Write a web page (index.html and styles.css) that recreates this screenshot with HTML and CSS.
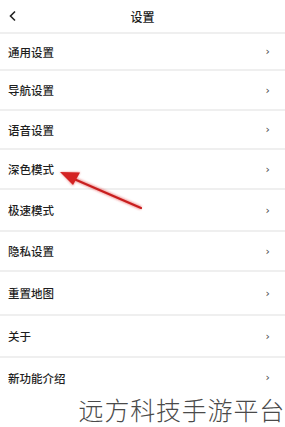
FILE: index.html
```html
<!DOCTYPE html>
<html lang="zh">
<head>
<meta charset="utf-8">
<link rel="stylesheet" href="styles.css">
</head>
<body>
<div class="screen">
  <header class="topbar">
    <svg class="back" width="10" height="12" viewBox="0 0 10 12"><path d="M7 1.5 L2.5 6 L7 10.5" fill="none" stroke="#222" stroke-width="1.6"/></svg>
    <span class="title">设置</span>
  </header>
  <ul class="list">
    <li class="row"><span>通用设置</span><i class="chev">›</i></li>
    <li class="row"><span>导航设置</span><i class="chev">›</i></li>
    <li class="row"><span>语音设置</span><i class="chev">›</i></li>
    <li class="row"><span>深色模式</span><i class="chev">›</i></li>
    <li class="row"><span>极速模式</span><i class="chev">›</i></li>
    <li class="row"><span>隐私设置</span><i class="chev">›</i></li>
    <li class="row"><span>重置地图</span><i class="chev">›</i></li>
    <li class="row"><span>关于</span><i class="chev">›</i></li>
    <li class="row"><span>新功能介绍</span><i class="chev">›</i></li>
  </ul>
  <svg class="arrow" width="285" height="427" viewBox="0 0 285 427">
    <defs>
      <filter id="glow" x="-20%" y="-20%" width="140%" height="140%">
        <feGaussianBlur stdDeviation="1.2"/>
      </filter>
    </defs>
    <g filter="url(#glow)" opacity="0.5">
      <line x1="141" y1="208" x2="72" y2="178" stroke="#e03030" stroke-width="4"/>
      <polygon points="60,172 80,172 73,186" fill="#e03030"/>
    </g>
    <line x1="141" y1="208" x2="74" y2="179" stroke="#c81e1e" stroke-width="2.2" stroke-linecap="round"/>
    <polygon points="60,172 80,172.5 73,185" fill="#d42222"/>
  </svg>
  <div class="watermark">远方科技手游平台</div>
</div>
</body>
</html>
```
FILE: styles.css
```css
* { box-sizing: border-box; margin: 0; padding: 0; }
html, body { background: #fff; }
body {
  font-family: "Noto Sans CJK SC", "Noto Sans", sans-serif;
  color: #222;
}
.screen {
  position: relative;
  width: 285px;
  height: 427px;
  overflow: hidden;
  background: #fff;
}
.topbar {
  height: 32px;
  display: flex;
  align-items: center;
  justify-content: center;
  position: relative;
}
.back {
  position: absolute;
  left: 8px;
  top: 10px;
}
.title {
  font-size: 12px;
  font-weight: 500;
  color: #222;
}
.list {
  list-style: none;
}
.row {
  height: 40px;
  border-top: 2px solid #efefef;
  display: flex;
  align-items: center;
  justify-content: space-between;
  padding: 0 15px 0 8px;
  font-size: 11.5px;
  font-weight: 500;
  color: #1e1e1e;
}
.row:nth-child(1) { height: 37px; }
.row:nth-child(2) { height: 40px; }
.row:nth-child(3) { height: 39px; }
.row:nth-child(4) { height: 40px; }
.row:nth-child(5) { height: 42px; }
.row:nth-child(6) { height: 40px; }
.row:nth-child(7) { height: 44px; }
.row:nth-child(8) { height: 42px; }
.row:nth-child(9) { height: 41px; }
.chev {
  font-style: normal;
  font-family: "DejaVu Sans", sans-serif;
  font-size: 11px;
  color: #444;
}
.arrow {
  position: absolute;
  left: 0;
  top: 0;
  pointer-events: none;
}
.watermark {
  position: absolute;
  right: 0;
  top: 393px;
  font-size: 25px;
  font-weight: 300;
  color: #4a4a4a;
  letter-spacing: 0.8px;
  line-height: 32px;
  white-space: nowrap;
}
```
